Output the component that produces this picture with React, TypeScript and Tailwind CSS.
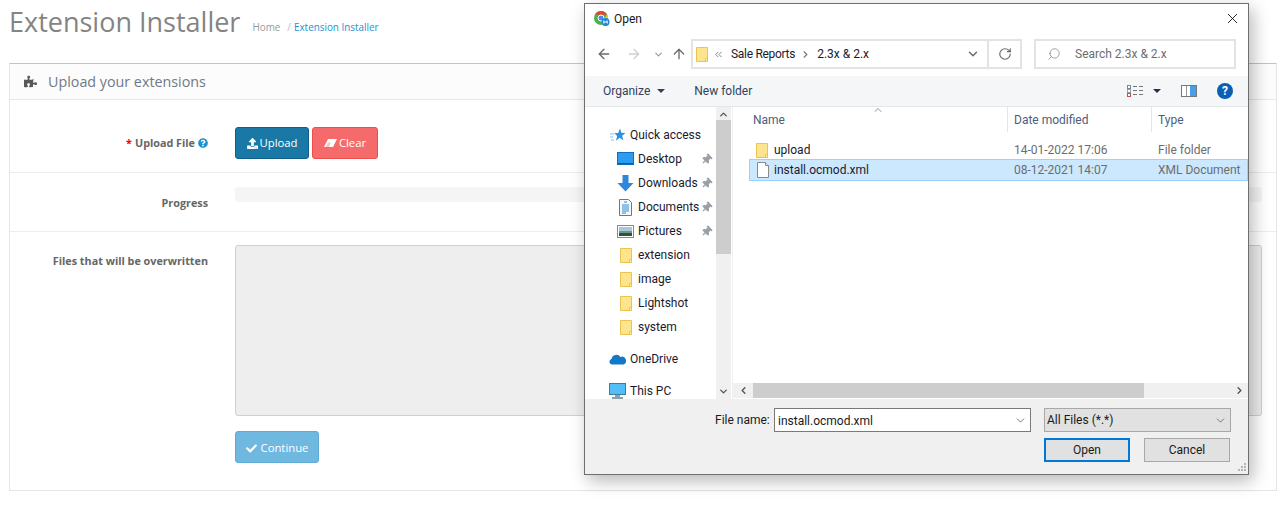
import { FaPuzzlePiece, FaUpload, FaCheck, FaQuestionCircle, FaThumbtack } from "react-icons/fa";
import { ArrowLeft, ArrowRight, ArrowUp, ChevronDown, ChevronUp, ChevronLeft, ChevronRight, ChevronsLeft, RotateCw, Search, X } from "lucide-react";

const SANS = "font-['Open_Sans',sans-serif]";
const WIN = "font-['Roboto',sans-serif]";

function FolderIcon() {
  return (
    <svg width="16" height="17" viewBox="0 0 16 17" className="shrink-0">
      <path d="M2.500 1.500h11v14h-11z" fill="#fde58f" stroke="#eac44e" />
      <path d="M11.500 12.500h2v3h-2z" fill="#fff2b8" stroke="#eac44e" />
    </svg>
  );
}

function FileIcon() {
  return (
    <svg width="16" height="18" viewBox="0 0 16 18" className="shrink-0">
      <path d="M2.500 1.500h8l3 3v12h-11z" fill="#fff" stroke="#8a8a8a" />
      <path d="M10.500 1.500v3h3" fill="#eee" stroke="#8a8a8a" />
    </svg>
  );
}

function ChromeIcon() {
  return (
    <svg width="17" height="17" viewBox="0 0 17 17" className="shrink-0">
      <circle cx="8" cy="8" r="7" fill="#4caf50" />
      <path d="M1.900 4.600A7 7 0 0 1 14.100 4.600L8 5z" fill="#e0492f" />
      <path d="M14.100 4.600A7 7 0 0 1 8 15l3-6z" fill="#f8c52c" />
      <circle cx="8" cy="8" r="3" fill="#4a8af0" stroke="#fff" />
      <circle cx="12.500" cy="12" r="4" fill="#1a88d8" />
      <path d="M10.800 10.500v3M14.200 10.500v3M10.800 12h3.400" stroke="#fff" />
    </svg>
  );
}

function QuickAccessIcon() {
  return (
    <svg width="16" height="15" viewBox="0 0 16 15" className="shrink-0">
      <path d="M10 0.500l1.300 4.300 4.200.2-3.400 2.800 1.300 4.700-3.800-2.700-3.700 2.900 1.300-4.700-3-2.700 4-.3z" fill="#2b8fe0" />
      <path d="M0 6h4M0 9h3M1 12h3" stroke="#7cc0f0" />
    </svg>
  );
}

function DesktopIcon() {
  return (
    <svg width="17" height="14" viewBox="0 0 17 14" className="shrink-0">
      <rect x="0.500" y="0.500" width="16" height="12" fill="#2c9cf0" stroke="#0f6fc0" />
      <path d="M1 11.500h15" stroke="#0a5aa0" />
    </svg>
  );
}

function DownloadsIcon() {
  return (
    <svg width="17" height="17" viewBox="0 0 17 17" className="shrink-0">
      <path d="M5.500 0h6v8h5l-8 8.500-8-8.500h5z" fill="#2f86dc" />
    </svg>
  );
}

function DocumentsIcon() {
  return (
    <svg width="17" height="17" viewBox="0 0 17 17" className="shrink-0">
      <path d="M2.500 0.500h9l3 3v13h-12z" fill="#f7f7f7" stroke="#777" />
      <path d="M7 3h3M5 6h7M5 8h7M5 10h7M5 12h7M5 14h4" stroke="#2a8ad8" />
    </svg>
  );
}

function PicturesIcon() {
  return (
    <svg width="17" height="13" viewBox="0 0 17 13" className="shrink-0">
      <rect x="0.500" y="0.500" width="16" height="12" fill="#fff" stroke="#808890" />
      <rect x="2" y="2" width="13" height="4" fill="#a8c8e0" />
      <rect x="2" y="6" width="13" height="2" fill="#6f9a78" />
      <rect x="2" y="8" width="13" height="3" fill="#2f4f4a" />
    </svg>
  );
}

function OneDriveIcon() {
  return (
    <svg width="17" height="12" viewBox="0 0 17 12" className="shrink-0">
      <path d="M3 11.500a2.800 2.800 0 0 1-.5-5.500A5 5 0 0 1 11.500 4a3.800 3.800 0 0 1 3 7.500z" fill="#1478c8" />
    </svg>
  );
}

function ThisPcIcon() {
  return (
    <svg width="17" height="17" viewBox="0 0 17 17" className="shrink-0">
      <rect x="0.500" y="0.500" width="16" height="11" fill="#55bdf5" stroke="#3a7ca8" />
      <path d="M6 13h5M3 15h11" stroke="#8aa0b0" strokeWidth="2" />
    </svg>
  );
}

function ViewsIcon() {
  return (
    <svg width="17" height="12" viewBox="0 0 17 12" className="shrink-0">
      <rect x="0.500" y="0.500" width="3" height="3" fill="#fff" stroke="#6d8aa8" />
      <rect x="0.500" y="4.500" width="3" height="3" fill="#fff" stroke="#a0a0a0" />
      <rect x="0.500" y="8.500" width="3" height="3" fill="#fff" stroke="#c05050" />
      <path d="M6 1.500h4M12 1.500h4M6 5.500h4M12 5.500h4M6 9.500h4M12 9.500h4" stroke="#777" />
    </svg>
  );
}

function PaneIcon() {
  return (
    <svg width="16" height="12" viewBox="0 0 16 12" className="shrink-0">
      <rect x="0.500" y="0.500" width="15" height="11" fill="#fff" stroke="#777" />
      <rect x="9" y="1" width="6" height="10" fill="#4a9ee8" />
      <path d="M5.500 1v10" stroke="#999" />
    </svg>
  );
}

function EraserIcon() {
  return (
    <svg width="13" height="8" viewBox="0 0 13 8" className="shrink-0">
      <path d="M4 0h9L9 8H0z" fill="#fff" />
      <path d="M4 3.500h3L5 8H1.500z" fill="#f56b6b" opacity="0.4" />
    </svg>
  );
}

function Pin() {
  return <FaThumbtack className="ml-auto mr-[4px] rotate-45 text-[11px] text-[#9aa0a6]" />;
}

const pinned = [
  { name: "Desktop", icon: <DesktopIcon /> },
  { name: "Downloads", icon: <DownloadsIcon /> },
  { name: "Documents", icon: <DocumentsIcon /> },
  { name: "Pictures", icon: <PicturesIcon /> },
];

function Sidebar() {
  return (
    <div className="flex h-full w-[131px] flex-col overflow-hidden bg-white pt-[16px] text-[12px] leading-[24px] text-[#1a1a2e]">
      <div className="flex h-6 shrink-0 items-center gap-[4px] pl-[25px]">
        <QuickAccessIcon />
        <span>Quick access</span>
      </div>
      {pinned.map((item) => (
        <div key={item.name} className="flex h-6 shrink-0 items-center pl-[32px]">
          <span className="flex w-[21px] shrink-0 items-center">{item.icon}</span>
          <span>{item.name}</span>
          <Pin />
        </div>
      ))}
      {["extension", "image", "Lightshot", "system"].map((name) => (
        <div key={name} className="flex h-6 shrink-0 items-center pl-[33px]">
          <span className="flex w-[20px] shrink-0 items-center">
            <FolderIcon />
          </span>
          <span>{name}</span>
        </div>
      ))}
      <div className="mt-2 flex h-6 shrink-0 items-center pl-[24px]">
        <span className="flex w-[21px] shrink-0 items-center">
          <OneDriveIcon />
        </span>
        <span>OneDrive</span>
      </div>
      <div className="mt-2 flex h-6 shrink-0 items-center pl-[24px]">
        <span className="flex w-[21px] shrink-0 items-center">
          <ThisPcIcon />
        </span>
        <span>This PC</span>
      </div>
    </div>
  );
}

function OpenDialog() {
  return (
    <div className={`${WIN} absolute left-[584px] top-[3px] flex h-[472px] w-[665px] flex-col border border-[#6e6e6e] bg-white shadow-[4px_6px_16px_rgba(0,0,0,0.28)]`}>
      {/* title bar */}
      <div className="flex h-[28px] shrink-0 items-center pl-2 pr-[7px] pt-[1px] text-[12px] text-[#1a1a1a]">
        <ChromeIcon />
        <span className="ml-[4px]">Open</span>
        <X size={17} strokeWidth={1.2} className="ml-auto text-black" />
      </div>

      {/* nav */}
      <div className="flex h-[44px] shrink-0 items-start pt-[7px] text-[12px]">
        <div className="flex h-[30px] w-[106px] shrink-0 items-center pl-[11px]">
          <ArrowLeft size={16} strokeWidth={2} className="text-[#6b6b6b]" />
          <ArrowRight size={16} strokeWidth={2} className="ml-[14px] text-[#d0d0d0]" />
          <ChevronDown size={11} strokeWidth={2.5} className="ml-[11px] text-[#9a9a9a]" />
          <ArrowUp size={16} strokeWidth={2} className="ml-[7px] text-[#6b6b6b]" />
        </div>
        <div className="flex h-[30px] w-[331px] shrink-0 items-center border-2 border-[#e3e3e3] pl-[1px] text-[#1a1a2e]">
          <FolderIcon />
          <ChevronsLeft size={11} className="ml-[3px] text-[#777]" />
          <span className="ml-[7px] tracking-[-0.3px]">Sale Reports</span>
          <ChevronRight size={11} strokeWidth={2.5} className="ml-[5px] text-[#777]" />
          <span className="ml-[6px]">2.3x &amp; 2.x</span>
          <ChevronDown size={14} strokeWidth={2.5} className="ml-auto mr-[7px] text-[#6b6b6b]" />
          <div className="flex h-full w-[33px] items-center justify-center border-l-2 border-[#e3e3e3]">
            <RotateCw size={14} strokeWidth={2} className="text-[#6b6b6b]" />
          </div>
        </div>
        <div className="ml-3 flex h-[30px] w-[202px] shrink-0 items-center border-2 border-[#e3e3e3] pl-[11px] text-[#6d6d6d]">
          <Search size={14} strokeWidth={1.2} className="-scale-x-100 text-[#8a7a70]" />
          <span className="ml-[14px]">Search 2.3x &amp; 2.x</span>
        </div>
      </div>

      {/* toolbar */}
      <div className="flex h-[31px] shrink-0 items-center border-b border-[#e6e6e6] bg-[#f5f6f7] pl-[18px] pr-[15px] text-[12px] text-[#33415c]">
        <span>Organize</span>
        <span className="ml-[7px] h-0 w-0 border-x-[4px] border-t-[4px] border-x-transparent border-t-[#33415c]" />
        <span className="ml-[29px]">New folder</span>
        <span className="ml-auto">
          <ViewsIcon />
        </span>
        <span className="ml-[9px] h-0 w-0 border-x-[4px] border-t-[4px] border-x-transparent border-t-[#1f3050]" />
        <span className="ml-[20px]">
          <PaneIcon />
        </span>
        <span className="ml-[20px] flex h-4 w-4 items-center justify-center rounded-full bg-[#0a5fb4] text-[12px] font-bold leading-none text-white">?</span>
      </div>

      {/* browser */}
      <div className="flex h-[292px] shrink-0">
        <Sidebar />
        <div className="flex w-[15px] shrink-0 flex-col items-center bg-[#f0f0f0]">
          <ChevronUp size={11} strokeWidth={3} className="mt-[2px] h-[11px] text-[#555]" />
          <div className="h-[134px] w-full bg-[#cdcdcd]" />
          <ChevronDown size={11} strokeWidth={3} className="mb-[2px] mt-auto text-[#555]" />
        </div>
        <div className="ml-[1px] flex min-w-0 flex-1 flex-col border-l border-[#f0f0f0]">
          <div className="relative flex h-[25px] shrink-0 text-[12px] text-[#4c607a]">
            <ChevronUp size={12} strokeWidth={1.4} className="absolute left-[139px] top-[-3px] text-[#666]" />
            <div className="flex h-full w-[274px] items-center pl-[20px]">Name</div>
            <div className="flex h-full w-[144px] items-center border-l border-[#e5e5e5] pl-[6px]">Date modified</div>
            <div className="flex h-full flex-1 items-center border-l border-[#e5e5e5] pl-[6px]">Type</div>
          </div>
          <div className="mt-[9px] flex h-[18px] shrink-0 items-center text-[12px]">
            <div className="flex w-[274px] items-center pl-[21px] text-[#1a1a2e]">
              <FolderIcon />
              <span className="ml-[4px]">upload</span>
            </div>
            <div className="w-[144px] pl-[7px] text-[#6d6d6d]">14-01-2022 17:06</div>
            <div className="pl-[7px] text-[#6d6d6d]">File folder</div>
          </div>
          <div className="ml-[16px] flex h-[22px] shrink-0 items-center border border-[#99d1ff] bg-[#cce8ff] text-[12px]">
            <div className="flex w-[257px] shrink-0 items-center pl-[5px] text-[#1a1a2e]">
              <FileIcon />
              <span className="ml-[3px]">install.ocmod.xml</span>
            </div>
            <div className="w-[144px] shrink-0 pl-[7px] text-[#6d6d6d]">08-12-2021 14:07</div>
            <div className="whitespace-nowrap pl-[7px] text-[#6d6d6d]">XML Document</div>
          </div>
          <div className="mb-[1px] mt-auto flex h-[15px] shrink-0 items-center bg-[#f0f0f0] text-[#555]">
            <span className="flex w-[20px] shrink-0 justify-center">
              <ChevronLeft size={11} strokeWidth={3} />
            </span>
            <div className="h-full w-[391px] bg-[#cdcdcd]" />
            <span className="ml-auto flex w-[17px] justify-center">
              <ChevronRight size={11} strokeWidth={3} />
            </span>
          </div>
        </div>
      </div>

      {/* footer */}
      <div className="relative flex flex-1 flex-col bg-[#f0f0f0] pl-[130px] pt-[9px] text-[12px] text-[#1a1a1a]">
        <div className="flex items-start">
          <span className="mt-[3px] w-[59px]">File name:</span>
          <div className="flex h-[24px] w-[257px] items-center border border-[#7a7a7a] bg-white pl-[3px] pt-[1px]">
            install.ocmod.xml
            <ChevronDown size={13} strokeWidth={1.4} className="ml-auto mr-[3px] text-[#555]" />
          </div>
          <div className="ml-[13px] flex h-[24px] w-[187px] items-center border border-[#a8a8a8] bg-[#e1e1e1] pl-[2px]">
            All Files (*.*)
            <ChevronDown size={13} strokeWidth={1.4} className="ml-auto mr-[3px] text-[#555]" />
          </div>
        </div>
        <div className="ml-[329px] mt-[6px] flex gap-[14px]">
          <div className="flex h-[24px] w-[86px] items-center justify-center border-2 border-[#0078d7] bg-[#e1e1e1]">Open</div>
          <div className="flex h-[24px] w-[86px] items-center justify-center border border-[#a8a8a8] bg-[#e1e1e1]">Cancel</div>
        </div>
        <svg width="11" height="11" viewBox="0 0 11 11" className="absolute bottom-[1px] right-[1px]">
          <path d="M8 1h2v2H8zM5 4h2v2H5zM8 4h2v2H8zM2 7h2v2H2zM5 7h2v2H5zM8 7h2v2H8z" fill="#b5b5b5" />
        </svg>
      </div>
    </div>
  );
}

export default function App() {
  return (
    <div className={`${SANS} relative h-[524px] w-[1283px] overflow-hidden bg-white`}>
      <div className="flex h-[63px] items-start pl-[9px]">
        <h1 className="text-[27px] leading-[44px] text-[#848484]">Extension Installer</h1>
        <div className="ml-[12px] mt-[19px] flex text-[9.9px] leading-[16px]">
          <span className="text-[#999]">Home</span>
          <span className="ml-[7px] text-[#bbb]">/</span>
          <span className="ml-[3px] text-[#1e91cf]">Extension Installer</span>
        </div>
      </div>

      <div className="ml-[9px] flex h-[428px] w-[1268px] flex-col border border-[#e5e5e5] border-t-[#c3c3c3]">
        <div className="flex h-[36px] shrink-0 items-center border-b border-[#e8e8e8] bg-[#fcfcfc] pl-[14px] text-[14.3px] text-[#6f7a85]">
          <FaPuzzlePiece className="text-[13px] text-[#595959]" />
          <span className="ml-[11px]">Upload your extensions</span>
        </div>

        <div className="flex h-[73px] shrink-0 items-start border-b border-[#ededed] pt-[27px]">
          <div className="flex h-[32px] w-[198px] shrink-0 items-center justify-end text-[10.8px] font-bold text-[#666]">
            <span className="mr-[3px] text-[#f00]">*</span>
            Upload File
            <FaQuestionCircle className="ml-[3px] text-[10px] text-[#1e91cf]" />
          </div>
          <div className="ml-[27px] flex gap-[3px] text-[11.3px] text-white">
            <div className="flex h-[32px] w-[74px] items-center justify-center gap-[2px] rounded-[3px] border border-[#0f5f88] bg-[#1978a5]">
              <FaUpload className="text-[11px]" />
              Upload
            </div>
            <div className="flex h-[32px] w-[66px] items-center justify-center gap-[2px] rounded-[3px] border border-[#ef4d4d] bg-[#f56b6b]">
              <EraserIcon />
              Clear
            </div>
          </div>
        </div>

        <div className="flex h-[59px] shrink-0 items-start border-b border-[#ededed] pt-[15px]">
          <div className="flex h-[30px] w-[198px] shrink-0 items-center justify-end text-[10.8px] font-bold text-[#666]">Progress</div>
          <div className="-mt-px ml-[27px] h-[15px] w-[1027px] rounded-[3px] bg-[#f5f5f5]" />
        </div>

        <div className="flex flex-1 items-start pt-[13px]">
          <div className="w-[198px] shrink-0 pt-[8px] text-right text-[10.8px] font-bold leading-[16px] text-[#666]">Files that will be overwritten</div>
          <div className="ml-[27px] flex w-[1027px] flex-col">
            <div className="h-[171px] rounded-[3px] border border-[#cfcfcf] bg-[#eeeeee]" />
            <div className="mt-[15px] flex h-[32px] w-[84px] items-center justify-center gap-[4px] rounded-[3px] border border-[#5fabd6] bg-[#6fb8e0] pt-[2px] text-[11.3px] text-white">
              <FaCheck className="text-[11px]" />
              Continue
            </div>
          </div>
        </div>
      </div>

      <OpenDialog />
    </div>
  );
}
